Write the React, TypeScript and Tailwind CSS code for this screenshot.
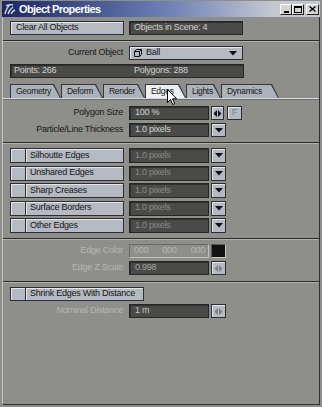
import React from "react";

const btn = "bg-[#b5b9c2] border border-[#2c2e34] shadow-[inset_1px_1px_0_#e2e5ea]";
const field = "bg-[#4a4b49] border border-[#262626] shadow-[inset_1px_1px_0_#2f2f2f]";

const DownArrow = ({ color = "#111" }: { color?: string }) => (
  <svg width="8" height="5" viewBox="0 0 8 5">
    <path d="M0 0h8L4 4.5z" fill={color} />
  </svg>
);

const Spinner = ({ color = "#111" }: { color?: string }) => (
  <svg width="9" height="7" viewBox="0 0 9 7">
    <path d="M4 0v7L0.5 3.5zM5 0v7l3.5-3.5z" fill={color} />
  </svg>
);

const Separator = ({ className = "" }: { className?: string }) => (
  <div className={`h-[2px] border-t border-t-[#2c2d2b] border-b border-b-[#b0b1ad] ${className}`} />
);

const tabs = [
  { label: "Geometry", w: "w-[51px]" },
  { label: "Deform", w: "w-[42px]" },
  { label: "Render", w: "w-[42px]" },
  { label: "Edges", w: "w-[41px]", active: true },
  { label: "Lights", w: "w-[35px]" },
  { label: "Dynamics", w: "w-[58px]" },
];

const edgeRows = ["Silhoutte Edges", "Unshared Edges", "Sharp Creases", "Surface Borders", "Other Edges"];

export default function App() {
  return (
    <div className="w-[322px] h-[407px] bg-[#8e8f8b] flex flex-col px-[2px] pt-[1px] pb-[2px] font-['Liberation_Sans',Arial,sans-serif] text-[9px] tracking-[-0.25px] text-[#161616] relative overflow-hidden">
      {/* title bar */}
      <div className="h-[16px] flex items-center bg-linear-to-r from-[#1b2766] via-[#7486b8] via-55% to-[#c4c8cf] to-85%">
        <svg width="14" height="14" viewBox="0 0 14 14" className="ml-[1px]">
          <path d="M2 12c1-4 2-7 5-9M5 12c1-3 2-5 5-7M8 12c1-2 2-3 4-4M3 4c2-1 4-2 7-1" stroke="#d8d8d8" strokeWidth="1.4" fill="none" />
        </svg>
        <span className="ml-[2px] text-[11px] font-bold tracking-[-0.6px] text-white">Object Properties</span>
        <div className="ml-auto mr-[1px] flex items-center">
          <div className="w-[12px] h-[11px] bg-[#d4d4d2] border border-[#fff] border-r-[#222] border-b-[#222] flex items-end justify-center pb-[1px]">
            <div className="w-[5px] h-[2px] bg-black" />
          </div>
          <div className="w-[12px] h-[11px] bg-[#d4d4d2] border border-[#fff] border-r-[#222] border-b-[#222] flex items-center justify-center">
            <div className="w-[8px] h-[7px] border border-black border-t-2" />
          </div>
          <div className="ml-[2px] w-[13px] h-[11px] bg-[#d4d4d2] border border-[#fff] border-r-[#222] border-b-[#222] flex items-center justify-center">
            <svg width="7" height="6" viewBox="0 0 7 6">
              <path d="M0.5 0.5l6 5M6.5 0.5l-6 5" stroke="#000" strokeWidth="1.3" />
            </svg>
          </div>
        </div>
      </div>

      {/* body */}
      <div className="flex-1 flex flex-col border-l border-l-[#c4c5c1] border-r border-r-[#2e2e2e] border-b border-b-[#2e2e2e]">
        <div className="ml-[7px] mt-[4px] flex h-[14px]">
          <div className={`${btn} w-[114px] flex items-center pl-[5px]`}>Clear All Objects</div>
          <div className={`${field} ml-[5px] w-[114px] flex items-center pl-[4px] text-[#d2d2d2]`}>Objects in Scene: 4</div>
        </div>

        <Separator className="mt-[5px]" />

        <div className="ml-[7px] mt-[4px] flex h-[14px] items-center">
          <div className="w-[114px] text-right pr-[1px]">Current Object</div>
          <div className={`${btn} ml-[5px] w-[114px] h-full flex items-center pl-[4px] pr-[5px]`}>
            <svg width="8" height="8" viewBox="0 0 8 8">
              <path d="M0.5 2.5h5v5h-5zM0.5 2.5l2-2h5v5l-2 2M5.5 2.5l2-2" stroke="#111" strokeWidth="1" fill="none" />
            </svg>
            <span className="ml-[4px]">Ball</span>
            <span className="ml-auto flex">
              <DownArrow />
            </span>
          </div>
        </div>

        <div className={`${field} ml-[7px] mt-[4px] w-[234px] h-[14px] flex items-center text-[#d2d2d2]`}>
          <div className="w-[119px] pl-[3px]">Points: 266</div>
          <div className="pl-[4px]">Polygons: 288</div>
        </div>

        {/* tabs */}
        <div className="ml-[7px] mt-[6px] flex h-[14px] text-[8.5px] tracking-[-0.3px]">
          {tabs.map((t) => (
            <div
              key={t.label}
              className={`${t.w} h-full pt-[1px] pl-[1px] pr-[1px] bg-[#34363a] [clip-path:polygon(0_0,calc(100%-7px)_0,100%_100%,0_100%)]`}
            >
              <div
                className={`h-full flex items-center pl-[5px] ${t.active ? "bg-[#eceef2]" : "bg-[#adb1ba]"} [clip-path:polygon(0_0,calc(100%-7px)_0,100%_100%,0_100%)]`}
              >
                {t.label}
              </div>
            </div>
          ))}
        </div>
        <div className="h-[2px] border-t border-t-[#d6d9df] border-b border-b-[#6d6e6b]" />

        <div className="ml-[7px] mt-[6px] flex h-[14px] items-center">
          <div className="w-[114px] text-right pr-[1px]">Polygon Size</div>
          <div className={`${field} ml-[5px] w-[80px] h-full flex items-center pl-[5px] text-[#d2d2d2]`}>100 %</div>
          <div className={`${btn} ml-[2px] w-[13px] h-full flex items-center justify-center`}>
            <Spinner />
          </div>
          <div className={`${btn} ml-[3px] w-[15px] h-full flex items-center justify-center text-[#7b7d82]`}>F</div>
        </div>

        <div className="ml-[7px] mt-[3px] flex h-[14px] items-center">
          <div className="w-[114px] text-right pr-[1px]">Particle/Line Thickness</div>
          <div className={`${field} ml-[5px] w-[80px] h-full flex items-center pl-[5px] text-[#d2d2d2]`}>1.0 pixels</div>
          <div className={`${btn} ml-[2px] w-[15px] h-full flex items-center justify-center`}>
            <DownArrow />
          </div>
        </div>

        <Separator className="mt-[5px]" />

        <div className="ml-[7px] mt-[4px] flex flex-col gap-[2.5px]">
          {edgeRows.map((label) => (
            <div key={label} className="flex h-[15px] items-center">
              <div className={`${btn} w-[16px] h-full`} />
              <div className={`${btn} w-[98px] h-full flex items-center pl-[4px] border-l-0`}>{label}</div>
              <div className={`${field} ml-[5px] w-[80px] h-full flex items-center pl-[5px] text-[#8b8c8a]`}>1.0 pixels</div>
              <div className={`${btn} ml-[2px] w-[15px] h-full flex items-center justify-center`}>
                <DownArrow />
              </div>
            </div>
          ))}
        </div>

        <Separator className="mt-[5px]" />

        <div className="ml-[7px] mt-[4px] flex h-[14px] items-center">
          <div className="w-[114px] text-right pr-[1px] text-[#b6b7b3]">Edge Color</div>
          <div className="ml-[5px] w-[80px] h-full flex items-center pl-[4px] pr-[3px] justify-between border border-[#6a6b68] border-r-[#c0c1bd] border-b-[#c0c1bd] text-[#b6b7b3]">
            <span>000</span>
            <span>000</span>
            <span>000</span>
          </div>
          <div className="ml-[2px] w-[15px] h-full bg-[#121212] border border-[#c6c7c3] border-t-[#5a5a5a] border-l-[#5a5a5a]" />
        </div>

        <div className="ml-[7px] mt-[3px] flex h-[14px] items-center">
          <div className="w-[114px] text-right pr-[1px] text-[#b6b7b3]">Edge Z Scale</div>
          <div className={`${field} ml-[5px] w-[80px] h-full flex items-center pl-[5px] text-[#a2a3a1]`}>0.998</div>
          <div className={`${btn} ml-[2px] w-[15px] h-full flex items-center justify-center`}>
            <Spinner color="#7d7f84" />
          </div>
        </div>

        <Separator className="mt-[6px]" />

        <div className="ml-[7px] mt-[4px] flex h-[14px] items-center">
          <div className={`${btn} w-[16px] h-full`} />
          <div className={`${btn} w-[118px] h-full flex items-center pl-[4px] border-l-0`}>Shrink Edges With Distance</div>
        </div>

        <div className="ml-[7px] mt-[3px] flex h-[14px] items-center">
          <div className="w-[114px] text-right pr-[1px] text-[#b6b7b3]">Nominal Distance</div>
          <div className={`${field} ml-[5px] w-[80px] h-full flex items-center pl-[5px] text-[#c4c4c4]`}>1 m</div>
          <div className={`${btn} ml-[2px] w-[15px] h-full flex items-center justify-center`}>
            <Spinner color="#7d7f84" />
          </div>
        </div>
      </div>

      {/* mouse pointer over the Edges tab */}
      <svg width="11" height="17" viewBox="0 0 11 17" className="absolute left-[167px] top-[89px]">
        <path d="M0.5 0.5v13l3-3 2.2 5 2-0.9-2.2-4.8h4.2z" fill="#fff" stroke="#000" strokeWidth="1" />
      </svg>
    </div>
  );
}
